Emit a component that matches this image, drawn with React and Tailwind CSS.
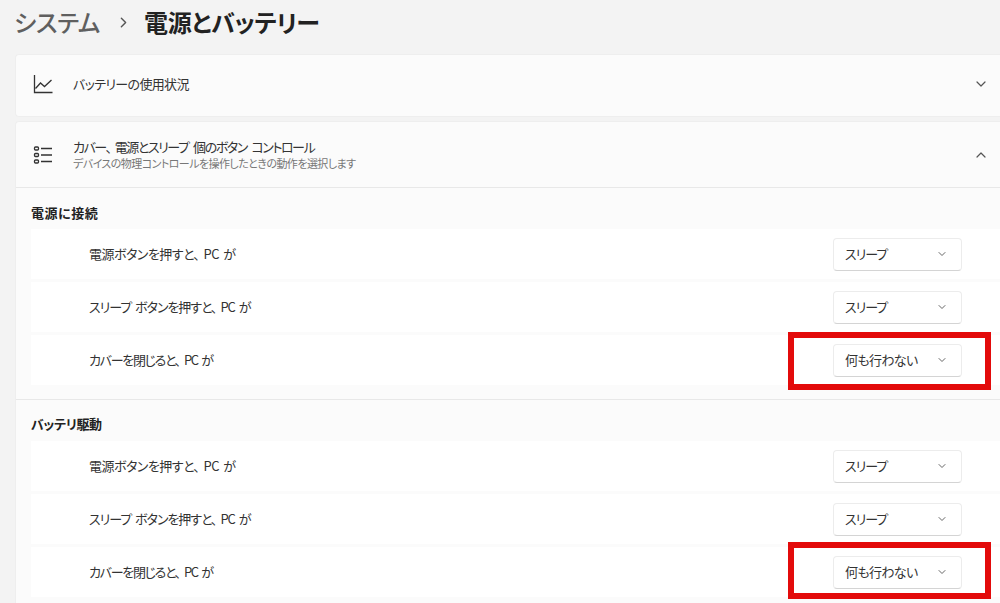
import React from "react";
import { ChevronDown, ChevronUp, ChevronRight } from "lucide-react";

const ChartIcon = () => (
  <svg width="20" height="20" viewBox="0 0 20 20" fill="none" stroke="#333" strokeWidth="1.3">
    <path d="M1.5 1v17.5h18" />
    <path d="M2.5 14.5l5-5.5 4 3.5 7-6.5" />
  </svg>
);

const ListIcon = () => (
  <svg width="20" height="20" viewBox="0 0 20 20" fill="none" stroke="#333" strokeWidth="1.3">
    <rect x="1.5" y="2" width="4" height="3" rx="1" />
    <rect x="1.5" y="8.5" width="4" height="3" rx="1" />
    <rect x="1.5" y="15" width="4" height="3" rx="1" />
    <path d="M8 3.5h11M8 10h11M8 16.5h11" />
  </svg>
);

const Comma = () => <span className="mr-[4px]">、</span>;

const Dropdown = ({ value, tracking }) => (
  <div className="w-[129px] h-[33px] flex items-center justify-between pl-[11px] pr-[13px] bg-white border border-[#ececec] border-b-[#d4d4d4] rounded-[4px] text-[13px] text-[#333]">
    <span className={tracking}>{value}</span>
    <ChevronDown size={12} strokeWidth={2} color="#666" />
  </div>
);

const Row = ({ row }) => (
  <div className="h-[50px] flex items-center justify-between pl-[58px] pr-[38px] bg-white">
    <span className={`text-[13px] text-[#333] [word-spacing:2px] ${row.tracking}`}>
      {row.before}
      <Comma />
      PC が
    </span>
    <Dropdown value={row.value} tracking={row.valueTracking} />
  </div>
);

const Section = ({ title, titleClass, highlight, className }) => (
  <div className={`relative ${className}`}>
    <div className={`pl-[15px] text-[13px] font-bold text-[#222] ${titleClass}`}>{title}</div>
    <div className="flex flex-col gap-[3px] ml-[15px]">
      {rows.map((r) => (
        <Row key={r.before} row={r} />
      ))}
    </div>
    {highlight}
  </div>
);

const RedBox = ({ className }) => (
  <div className={`absolute left-[772px] w-[203px] border-[6px] border-[#e30b0b] ${className}`} />
);

const rows = [
  { before: "電源ボタンを押すと", value: "スリープ", tracking: "tracking-[-0.04em]", valueTracking: "tracking-[-0.08em]" },
  { before: "スリープ ボタンを押すと", value: "スリープ", tracking: "tracking-[-0.08em]", valueTracking: "tracking-[-0.08em]" },
  { before: "カバーを閉じると", value: "何も行わない", tracking: "tracking-[-0.1em]", valueTracking: "tracking-[-0.05em]" },
];

export default function App() {
  return (
    <div className="h-[603px] w-[1000px] overflow-hidden bg-[#f3f3f3] font-['Noto_Sans_CJK_JP','Noto_Sans',sans-serif] [font-feature-settings:'palt'] tracking-[-0.02em]">
      <div className="h-[54px] pl-[14px] pb-[10px] flex items-center">
        <span className="text-[24px] font-medium text-[#5f5f5f]">システム</span>
        <ChevronRight size={17} strokeWidth={2} color="#555" className="ml-[15px] mr-[12px]" />
        <span className="text-[24px] font-bold text-[#222]">電源とバッテリー</span>
      </div>

      <div className="ml-[15px] h-[63px] flex items-center pl-[17px] pr-[11px] pb-[3px] bg-[#fbfbfb] border border-r-0 border-[#eeeeee] rounded-l-[4px]">
        <ChartIcon />
        <span className="ml-[20px] text-[13px] text-[#333] tracking-[-0.05em]">バッテリーの使用状況</span>
        <ChevronDown size={16} strokeWidth={1.8} color="#555" className="ml-auto" />
      </div>

      <div className="ml-[15px] mt-[4px] bg-[#fbfbfb] border border-r-0 border-[#eeeeee] rounded-l-[4px]">
        <div className="h-[66px] flex items-center pl-[17px] pr-[11px] border-b border-[#e8e8e8]">
          <ListIcon />
          <div className="ml-[20px] flex flex-col">
            <span className="text-[13px] leading-[18px] text-[#333] tracking-[-0.11em] [word-spacing:3px]">
              カバー
              <Comma />
              電源とスリープ 個のボタン コントロール
            </span>
            <span className="text-[11px] leading-[15px] text-[#777] tracking-[-0.05em]">デバイスの物理コントロールを操作したときの動作を選択します</span>
          </div>
          <ChevronUp size={16} strokeWidth={1.8} color="#555" className="ml-auto" />
        </div>

        <Section
          title="電源に接続"
          titleClass="h-[41px] pt-[15px] tracking-[0.04em]"
          className="pb-[14px] border-b border-[#e8e8e8]"
          highlight={<RedBox className="top-[144px] h-[58px]" />}
        />
        <Section
          title="バッテリ駆動"
          titleClass="h-[41px] pt-[14px] tracking-[-0.03em]"
          className="pb-[10px]"
          highlight={<RedBox className="top-[142px] h-[57px]" />}
        />
      </div>
    </div>
  );
}
